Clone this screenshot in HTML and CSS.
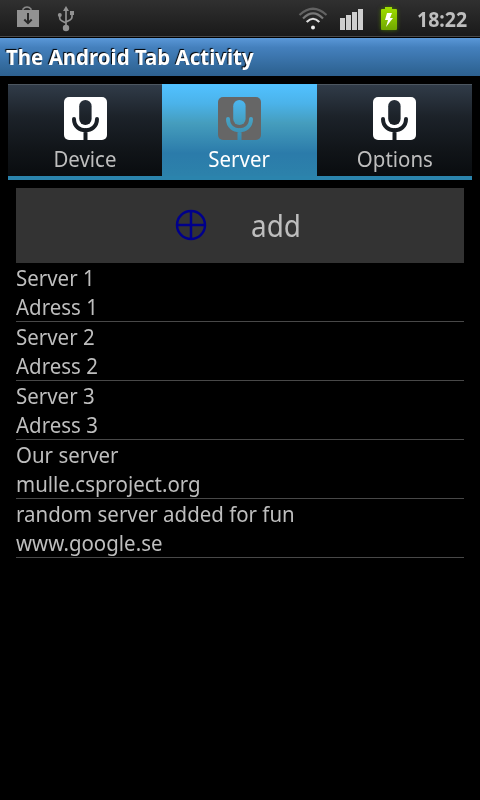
FILE: index.html
```html
<!DOCTYPE html>
<html lang="en">
<head>
<meta charset="utf-8">
<title>The Android Tab Activity</title>
<link rel="stylesheet" href="styles.css">
</head>
<body>
<svg class="defs" width="0" height="0" aria-hidden="true">
  <defs>
    <mask id="mic-cut">
      <rect width="43" height="43" rx="5" fill="#fff"/>
      <rect x="15.2" y="3" width="12.4" height="25" rx="6.2" fill="#000"/>
      <path d="M10 22C10 37 33 37 33 22M21.5 33V43" fill="none" stroke="#000" stroke-width="4" stroke-linecap="round"/>
    </mask>
    <symbol id="mic" viewBox="0 0 43 43"><rect width="43" height="43" fill="currentColor" mask="url(#mic-cut)"/></symbol>
  </defs>
</svg>
<header class="status">
  <svg class="bag" width="24" height="24" viewBox="0 0 24 24"><path d="M7 7V5a5 5 0 0 1 8 0v2" fill="none" stroke="#8a8a8a" stroke-width="1.4"/><path d="M1 6H23V23H1Z" fill="#929292"/><path d="M12 9V19M8.300 15.500L12 19.200L15.700 15.500" fill="none" stroke="#292929" stroke-width="2"/></svg>
  <svg class="usb" width="18" height="26" viewBox="0 0 18 26"><path d="M9 4V22M2.700 9V12Q2.700 14 5 15L9 17M15 8V11Q15 13 13 14L9 16" fill="none" stroke="#929292" stroke-width="1.700"/><path d="M9 0L12 5H6Z" fill="#929292"/><circle cx="9" cy="22" r="3.200" fill="#929292"/><circle cx="2.800" cy="9" r="2" fill="#929292"/><path d="M13 5h4v4h-4z" fill="#929292"/></svg>
  <svg class="wifi" width="30" height="24" viewBox="0 0 30 24" fill="none" stroke-width="2.200"><path d="M1.500 8Q15-4.500 28.500 8" stroke="#626262"/><path d="M5 11.500Q15 1.500 25 11.500" stroke="#777"/><path d="M8.700 15Q15 8.500 21.300 15" stroke="#ddd"/><circle cx="15" cy="20.500" r="2" fill="#eee"/></svg>
  <svg class="signal" width="24" height="22" viewBox="0 0 24 22" fill="#cecece"><path d="M0 10h5v12H0zM6 7h5v15H6zM12 4h5v18h-5zM18 1h5v21h-5z"/></svg>
  <svg class="battery" width="18" height="24" viewBox="0 0 18 24"><defs><linearGradient id="charge" x2="0" y2="1"><stop stop-color="#a0df00"/><stop offset="1" stop-color="#70a700"/></linearGradient></defs><path d="M1 3Q1 2 2 2H5V0H12V2H16Q17 2 17 3V22Q17 23 16 23H2Q1 23 1 22Z" fill="url(#charge)"/><path d="M7 6H12L10 11H13L6 20L8 13H5Z" fill="#fff"/></svg>
  <time><span class="fit">18:22</span></time>
</header>
<h1><span class="fit">The Android Tab Activity</span></h1>
<main>
  <nav>
    <div class="tab"><svg width="43" height="43"><use href="#mic"/></svg><span class="fit">Device</span></div>
    <div class="tab active"><svg width="43" height="43"><use href="#mic"/></svg><span class="fit">Server</span></div>
    <div class="tab"><svg width="43" height="43"><use href="#mic"/></svg><span class="fit">Options</span></div>
  </nav>
  <section>
    <div class="add">
      <svg width="32" height="32" viewBox="0 0 32 32" fill="none" stroke="#00008b" stroke-width="2.500"><circle cx="16" cy="16" r="14"/><path d="M1 16H31M16 1V31"/></svg>
      <span class="fit">add</span>
    </div>
    <ul>
      <li><p class="fit">Server 1</p><p class="fit">Adress 1</p></li>
      <li><p class="fit">Server 2</p><p class="fit">Adress 2</p></li>
      <li><p class="fit">Server 3</p><p class="fit">Adress 3</p></li>
      <li><p class="fit">Our server</p><p class="fit">mulle.csproject.org</p></li>
      <li><p class="fit">random server added for fun</p><p class="fit">www.google.se</p></li>
    </ul>
  </section>
</main>
</body>
</html>
```
FILE: styles.css
```css
* { box-sizing: border-box; margin: 0; padding: 0; }
body { width: 480px; height: 800px; overflow: hidden; background: #000; color: #bebebe; font: 22px/29px "Noto Sans", "Open Sans", sans-serif; }
svg { display: block; flex: none; }
.defs { position: absolute; }
.fit { display: block; width: max-content; transform: scaleX(.93); transform-origin: left; white-space: nowrap; }
.status { display: flex; align-items: flex-start; height: 38px; padding-left: 16px; background: linear-gradient(#303030, #191919); border-bottom: 1px solid #000; box-shadow: inset 0 -1px #484848; }
.bag { margin-top: 4px; }
.usb { margin: 6px 0 0 17px; }
.wifi { margin: 7px 0 0 223px; }
.signal { margin: 8px 0 0 12px; }
.battery { margin: 7px 0 0 16px; filter: drop-shadow(0 0 2px #467000); }
time { margin: 5px 0 0 19px; font-size: 21px; font-weight: 700; color: #bebebe; }
h1 { height: 38px; padding: 4px 6px; background: linear-gradient(#5a98d8, #4480bd 25%, #306697 85%, #2d6090); color: #fff; font-size: 22px; line-height: 29px; text-shadow: -1px -1px 1px #000; }
main { padding: 8px; }
nav { display: grid; grid-template-columns: 154px 155px 155px; height: 96px; border-bottom: 4px solid #2b84ad; box-shadow: inset 0 0 #000; }
.tab { display: flex; flex-direction: column; align-items: center; padding-top: 12px; background: linear-gradient(#303b48, #1c2229 35%, #111519 70%, #090c0f); border-top: 1px solid #4c5660; }
.tab svg { color: #fff; }
.tab .fit { margin-top: 4px; transform-origin: center; }
.active { padding-top: 12px; border-top-color: #51c1ff; background: linear-gradient(#51c1ff, #4bb3ea 20%, #459dbd 42%, #2b7baa 75%, #2c82ab); color: #fff; }
.active svg { color: #666; }
section { padding: 8px 8px 0; }
.add { display: flex; align-items: flex-start; height: 75px; padding: 21px 0 0 159px; background: #333; }
.add .fit { margin: -2px 0 0 44px; font-size: 30px; line-height: 38px; }
ul { list-style: none; }
li { height: 59px; border-bottom: 1px solid #484848; }
```
